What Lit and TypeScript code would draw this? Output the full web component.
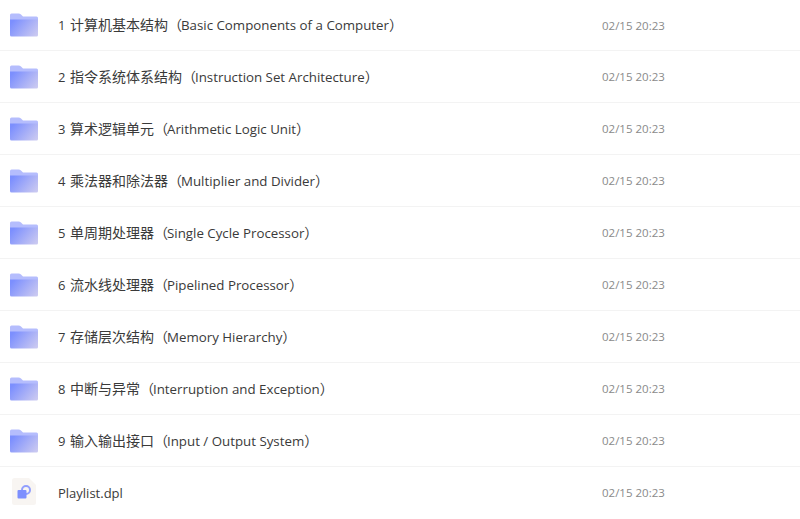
import { LitElement, html, css } from "lit";
import { customElement } from "lit/decorators.js";

const names: [string, string, string][] = [
  ["1", "计算机基本结构（", "Basic Components of a Computer"],
  ["2", "指令系统体系结构（", "Instruction Set Architecture"],
  ["3", "算术逻辑单元（", "Arithmetic Logic Unit"],
  ["4", "乘法器和除法器（", "Multiplier and Divider"],
  ["5", "单周期处理器（", "Single Cycle Processor"],
  ["6", "流水线处理器（", "Pipelined Processor"],
  ["7", "存储层次结构（", "Memory Hierarchy"],
  ["8", "中断与异常（", "Interruption and Exception"],
  ["9", "输入输出接口（", "Input / Output System"],
];

const folder = (i: number) => html`<svg class="icon" width="28" height="24" viewBox="0 0 28 24">
  <defs>
    <linearGradient id="f${i}" x1="0" y1="0.3" x2="1" y2="0.8">
      <stop offset="0" stop-color="#7c8ffe"/>
      <stop offset="1" stop-color="#c9c8f1"/>
    </linearGradient>
  </defs>
  <path d="M1.5 0.5H8.5Q10 0.5 11 1.5L13 3.5H26.5Q28 3.5 28 5V9H0V2Q0 0.5 1.5 0.5Z" fill="#b5bdfd"/>
  <path d="M0 6.5H28V22Q28 23.5 26.5 23.5H1.5Q0 23.5 0 22Z" fill="url(#f${i})"/>
</svg>`;

const file = html`<svg class="icon file" width="24" height="27" viewBox="0 0 24 27">
  <path d="M2.5 0H17L24 7V24.5Q24 27 21.5 27H2.5Q0 27 0 24.5V2.5Q0 0 2.5 0Z" fill="#f8f5f2"/>
  <circle cx="14" cy="12" r="4" fill="none" stroke="#929ffd" stroke-width="2"/>
  <rect x="5.5" y="12" width="9" height="8.5" rx="1" fill="#7d8ffe"/>
</svg>`;

@customElement("app-root")
export class AppRoot extends LitElement {
  static styles = css`
    :host {
      display: block;
      width: 800px;
      height: 519px;
      overflow: hidden;
      background: #fff;
      font-family: "Open Sans", "Noto Sans CJK SC", sans-serif;
    }
    .row {
      display: flex;
      align-items: center;
      height: 51px;
      border-bottom: 1px solid #f3f3f3;
      padding-left: 10px;
    }
    .row:first-child {
      height: 50px;
    }
    .row.last {
      border-bottom: none;
    }
    .icon-box {
      width: 48px;
      flex: none;
      display: flex;
      align-items: center;
    }
    .icon {
      display: block;
    }
    .file {
      margin-left: 2px;
      margin-top: -2px;
    }
    .name {
      flex: 1;
      font-size: 13px;
      line-height: 20px;
      color: #3a3a3a;
      white-space: nowrap;
    }
    .num {
      display: inline-block;
      width: 12px;
    }
    .cjk {
      font-size: 14px;
    }
    .latin {
      font-size: 13.3px;
      margin-left: -1px;
    }
    .date {
      width: 198px;
      flex: none;
      font-size: 11.5px;
      color: #8a8a8a;
    }
  `;

  render() {
    return html`
      ${names.map(
        ([num, cjk, latin], i) => html`<div class="row">
          <div class="icon-box">${folder(i)}</div>
          <div class="name"><span class="num">${num}</span><span class="cjk">${cjk}</span><span class="latin">${latin}</span><span class="cjk">）</span></div>
          <div class="date">02/15 20:23</div>
        </div>`
      )}
      <div class="row last">
        <div class="icon-box">${file}</div>
        <div class="name">Playlist.dpl</div>
        <div class="date">02/15 20:23</div>
      </div>
    `;
  }
}
